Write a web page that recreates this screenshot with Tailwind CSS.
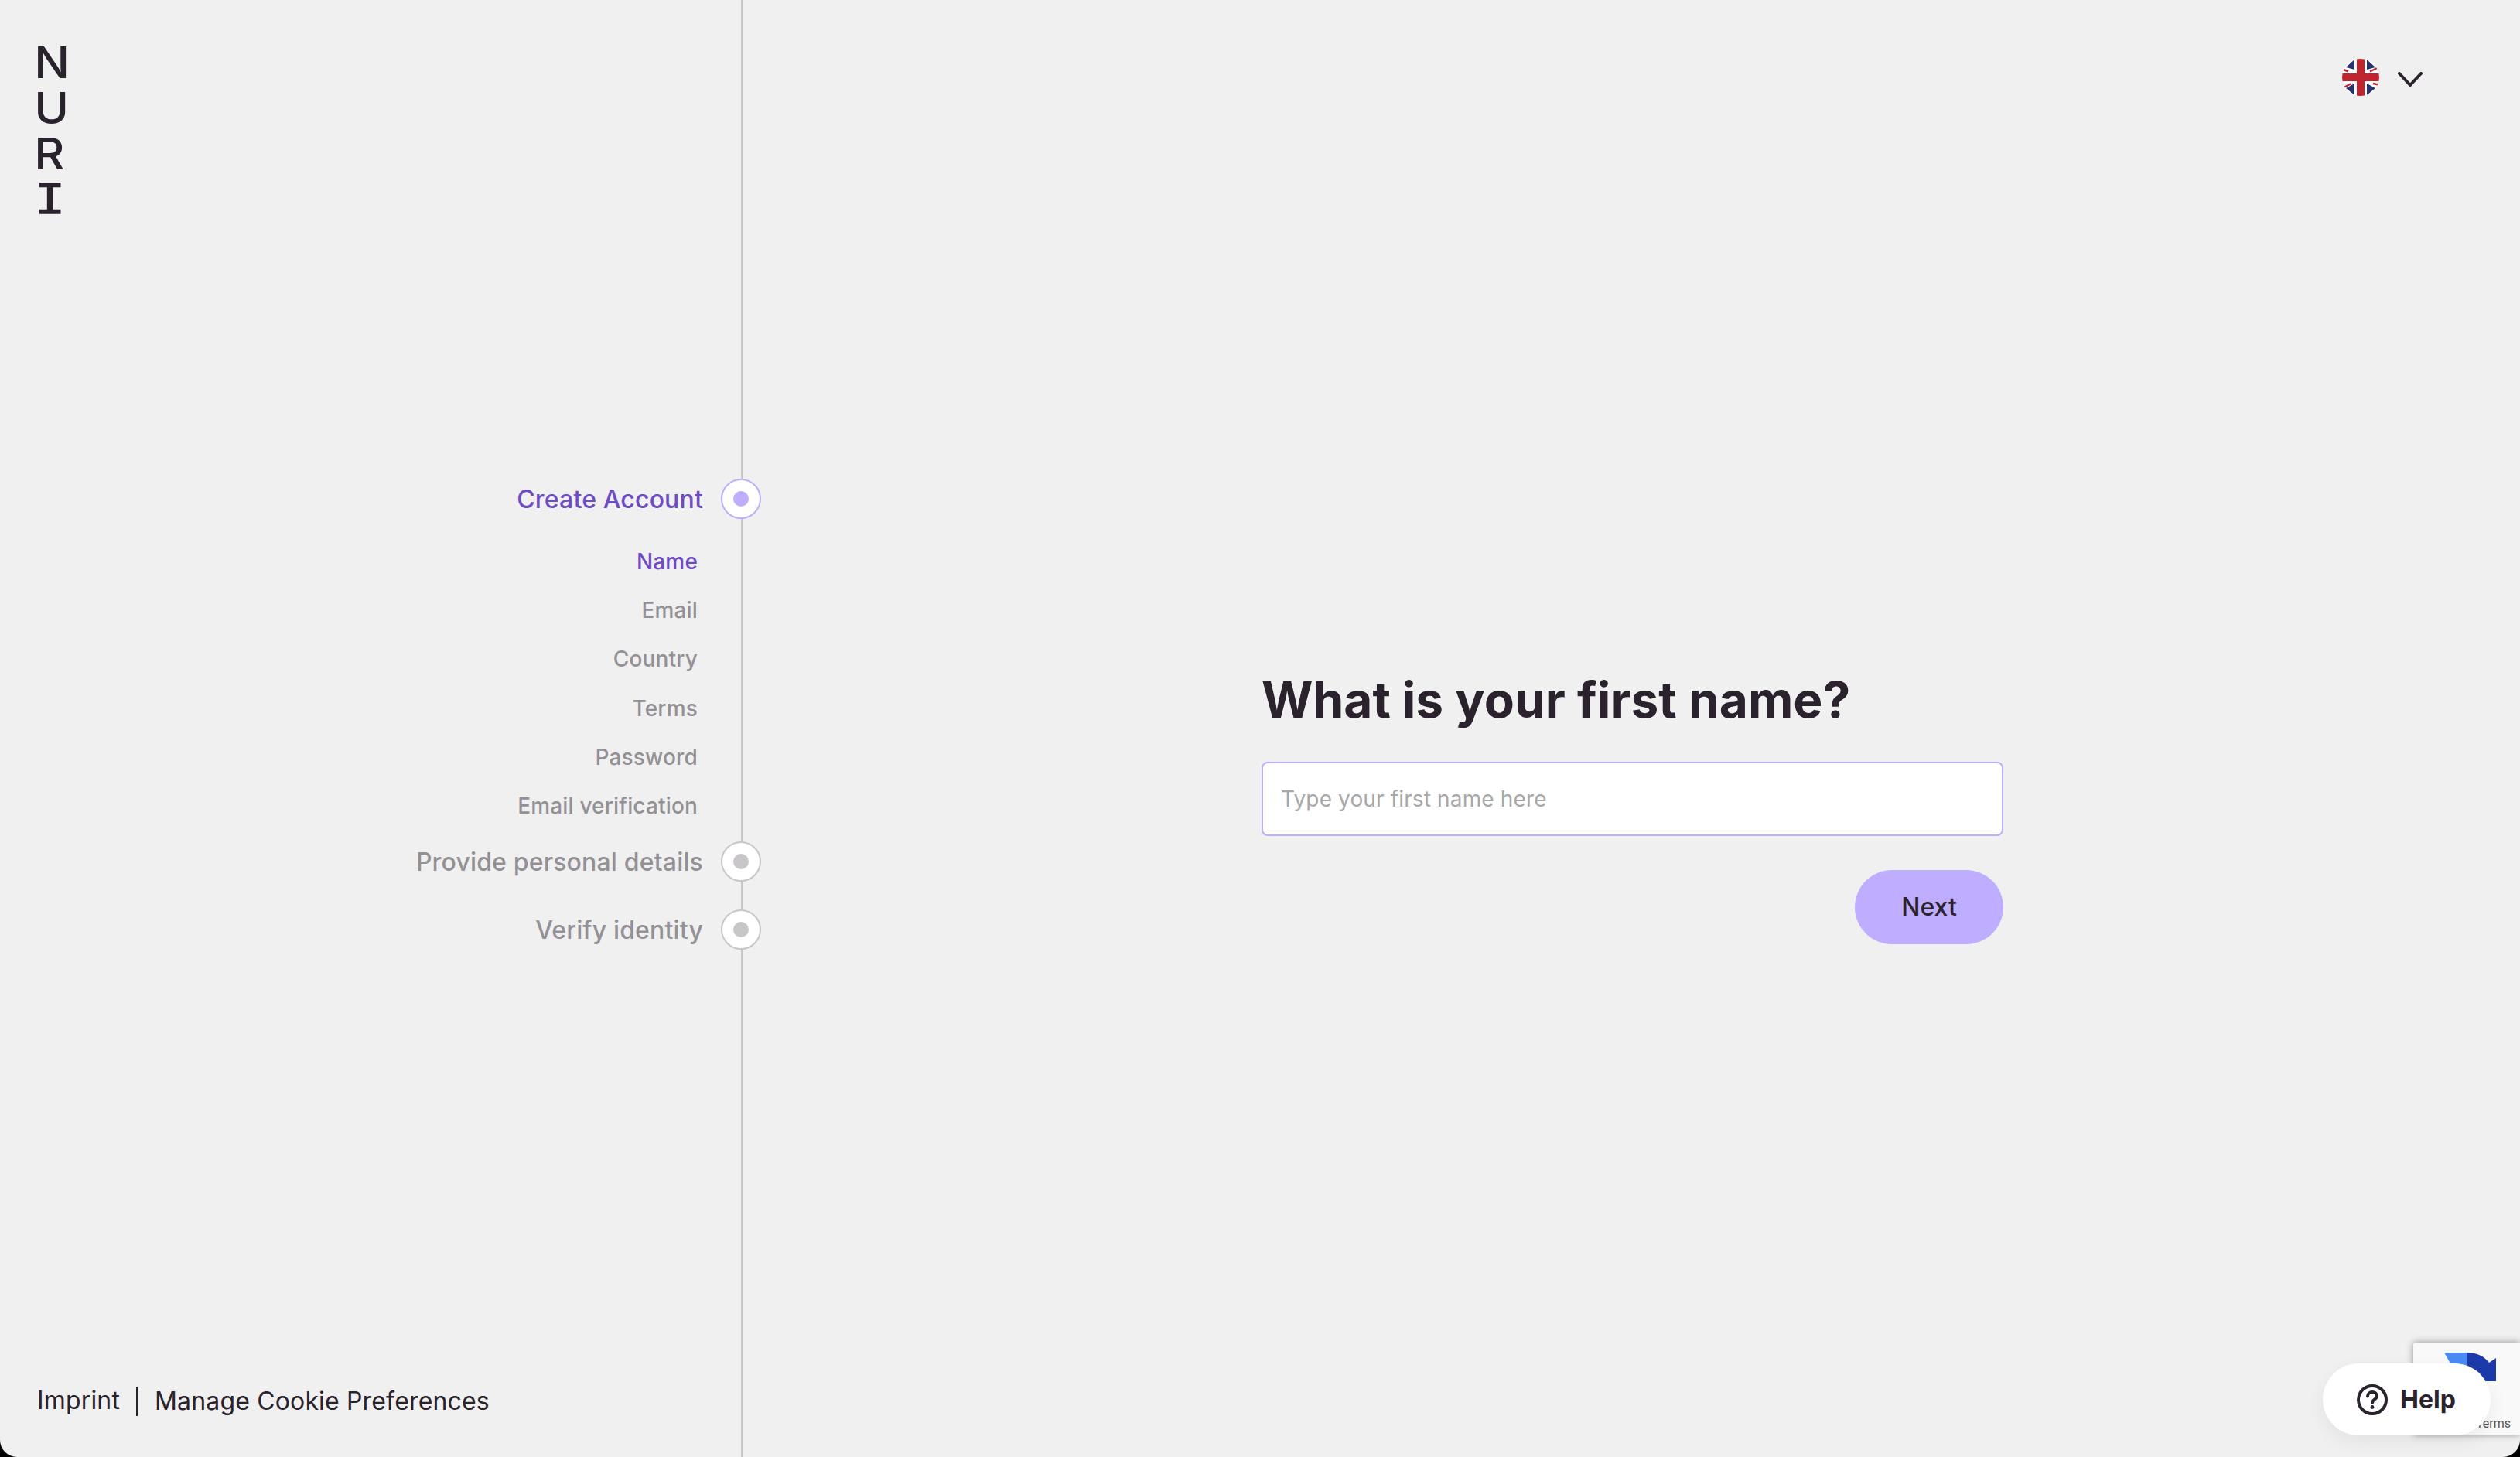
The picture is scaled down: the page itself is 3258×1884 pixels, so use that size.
<!DOCTYPE html>
<html lang="en">
  <head>
    <meta charset="UTF-8" />
    <title>Nuri - Create Account</title>
    <script src="https://cdn.jsdelivr.net/npm/@tailwindcss/browser@4"></script>
  </head>
  <body class="bg-black">
    <div class="relative flex h-[1884px] w-[3258px] overflow-hidden rounded-b-[22px] bg-[#f0f0f0] font-['Inter',sans-serif] text-[#2a222c]">
      <!-- sidebar -->
      <aside class="flex h-full w-[960px] shrink-0 flex-col border-r-2 border-[#c8c6c9]">
        <div class="flex origin-left scale-x-[1.08] flex-col items-start pl-[41px] pt-[52px] text-[56px] font-medium leading-[59px]">
          <span>N</span>
          <span>U</span>
          <span>R</span>
          <span class="ml-[1px] mt-[2px] font-['Liberation_Mono',monospace] text-[60px] font-normal [-webkit-text-stroke:1.5px_#2a222c]">I</span>
        </div>

        <div class="mt-[329px] flex flex-col items-end tracking-[0.01em]">
          <div class="-mr-[26px] flex items-center gap-[23px] text-[32px] font-medium text-[#6f4bc4]">
            <span class="pt-[2px]">Create Account</span>
            <span class="flex h-[52px] w-[52px] items-center justify-center rounded-full border-2 border-[#bfadff] bg-white">
              <span class="h-[20px] w-[20px] rounded-full bg-[#bfadff]"></span>
            </span>
          </div>

          <ul class="mt-[24px] flex flex-col items-end pr-[56px] text-[28px] font-medium leading-[63.2px] text-[#949196]">
            <li class="text-[#6f4bc4]">Name</li>
            <li>Email</li>
            <li>Country</li>
            <li>Terms</li>
            <li>Password</li>
            <li>Email verification</li>
          </ul>

          <div class="-mr-[26px] mt-[14px] flex items-center gap-[23px] text-[32px] font-medium text-[#949196]">
            <span class="pt-[2px]">Provide personal details</span>
            <span class="flex h-[52px] w-[52px] items-center justify-center rounded-full border-2 border-[#c8c6c9] bg-white">
              <span class="h-[20px] w-[20px] rounded-full bg-[#c8c6c9]"></span>
            </span>
          </div>
          <div class="-mr-[26px] mt-[36px] flex items-center gap-[23px] text-[32px] font-medium text-[#949196]">
            <span class="pt-[2px]">Verify identity</span>
            <span class="flex h-[52px] w-[52px] items-center justify-center rounded-full border-2 border-[#c8c6c9] bg-white">
              <span class="h-[20px] w-[20px] rounded-full bg-[#c8c6c9]"></span>
            </span>
          </div>
        </div>

        <div class="mt-auto flex items-center pb-[48px] pl-[48px] text-[32px] tracking-[0.005em]">
          <a class="-mt-[3px]">Imprint</a>
          <span class="ml-[21px] h-[38px] w-[2px] bg-[#2a222c]"></span>
          <a class="ml-[22px]">Manage Cookie Preferences</a>
        </div>
      </aside>

      <!-- main -->
      <main class="flex flex-1 flex-col">
        <div class="flex items-center justify-end pr-[126px] pt-[76px]">
          <svg class="h-[48px] w-[48px]" viewBox="0 0 48 48">
            <defs><clipPath id="flag"><circle cx="24" cy="24" r="24" /></clipPath></defs>
            <g clip-path="url(#flag)">
              <rect width="48" height="48" fill="#fff" />
              <path d="M5 11 16 1V14ZM43 11 32 1V14ZM5 38 16 32V47ZM43 38 32 32V47Z" fill="#28336b" />
              <path d="M2 14 8 16.5M36 16.5 45 12M3 36.5 12 32M40 32 47 33.5" stroke="#c0252f" stroke-width="2.5" />
              <path d="M24 0V48M0 24H48" stroke="#c0252f" stroke-width="10" />
            </g>
          </svg>
          <svg class="ml-[24px] mt-[6px] h-[20px] w-[32px]" viewBox="0 0 32 20" fill="none" stroke="#2a222c" stroke-width="4" stroke-linecap="round" stroke-linejoin="round">
            <path d="M2 2 16 17 30 2" />
          </svg>
        </div>

        <form class="ml-[671px] mt-[741px] flex w-[959px] flex-col">
          <h1 class="text-[64px] font-bold leading-[80px]">What is your first name?</h1>
          <input
            type="text"
            placeholder="Type your first name here"
            class="mt-[40px] h-[96px] w-full rounded-[8px] border-2 border-[#bfadff] bg-white px-[23px] text-[28px] tracking-[0.005em] outline-none placeholder:text-[#a8a8a8]"
          />
          <button type="button" class="mt-[44px] h-[96px] w-[192px] self-end rounded-full bg-[#bfadff] text-[32px] font-medium">Next</button>
        </form>
      </main>

      <!-- recaptcha badge -->
      <div class="absolute right-0 top-[1736px] h-[119px] w-[138px] overflow-hidden rounded-l-[3px] bg-[#f9f9f9] shadow-[0_0_10px_rgba(0,0,0,0.4)]">
        <svg class="absolute left-[40px] top-[13px] h-[38px] w-[68px]" viewBox="0 0 68 38">
          <path d="M0 0H30V26H10L8 14 0 0Z" fill="#4a8af4" />
          <path d="M30 0C42 0 52 5 58 13L67 7V37H37L46 27C42 23 36 21 30 21Z" fill="#1c3aa9" />
        </svg>
        <span class="absolute right-[12px] top-[95px] font-['Roboto',sans-serif] text-[16px] leading-[20px] text-[#555]">Terms</span>
      </div>

      <!-- help -->
      <button class="absolute left-[3003px] top-[1763px] flex h-[93px] w-[217px] items-center gap-[16px] rounded-full bg-white pl-[44px] text-[32px] font-bold shadow-[0_8px_24px_rgba(0,0,0,0.06)]">
        <svg class="h-[40px] w-[40px]" viewBox="0 0 40 40" fill="none" stroke="#2a222c" stroke-width="4">
          <circle cx="20" cy="20" r="18" />
          <path d="M14 15.5C14 12 16.8 10 20 10C23.2 10 26 12 26 15.2C26 19.5 20 19.5 20 24" stroke-linecap="round" />
          <circle cx="20" cy="29.5" r="2.4" fill="#2a222c" stroke="none" />
        </svg>
        <span>Help</span>
      </button>
    </div>
  </body>
</html>
